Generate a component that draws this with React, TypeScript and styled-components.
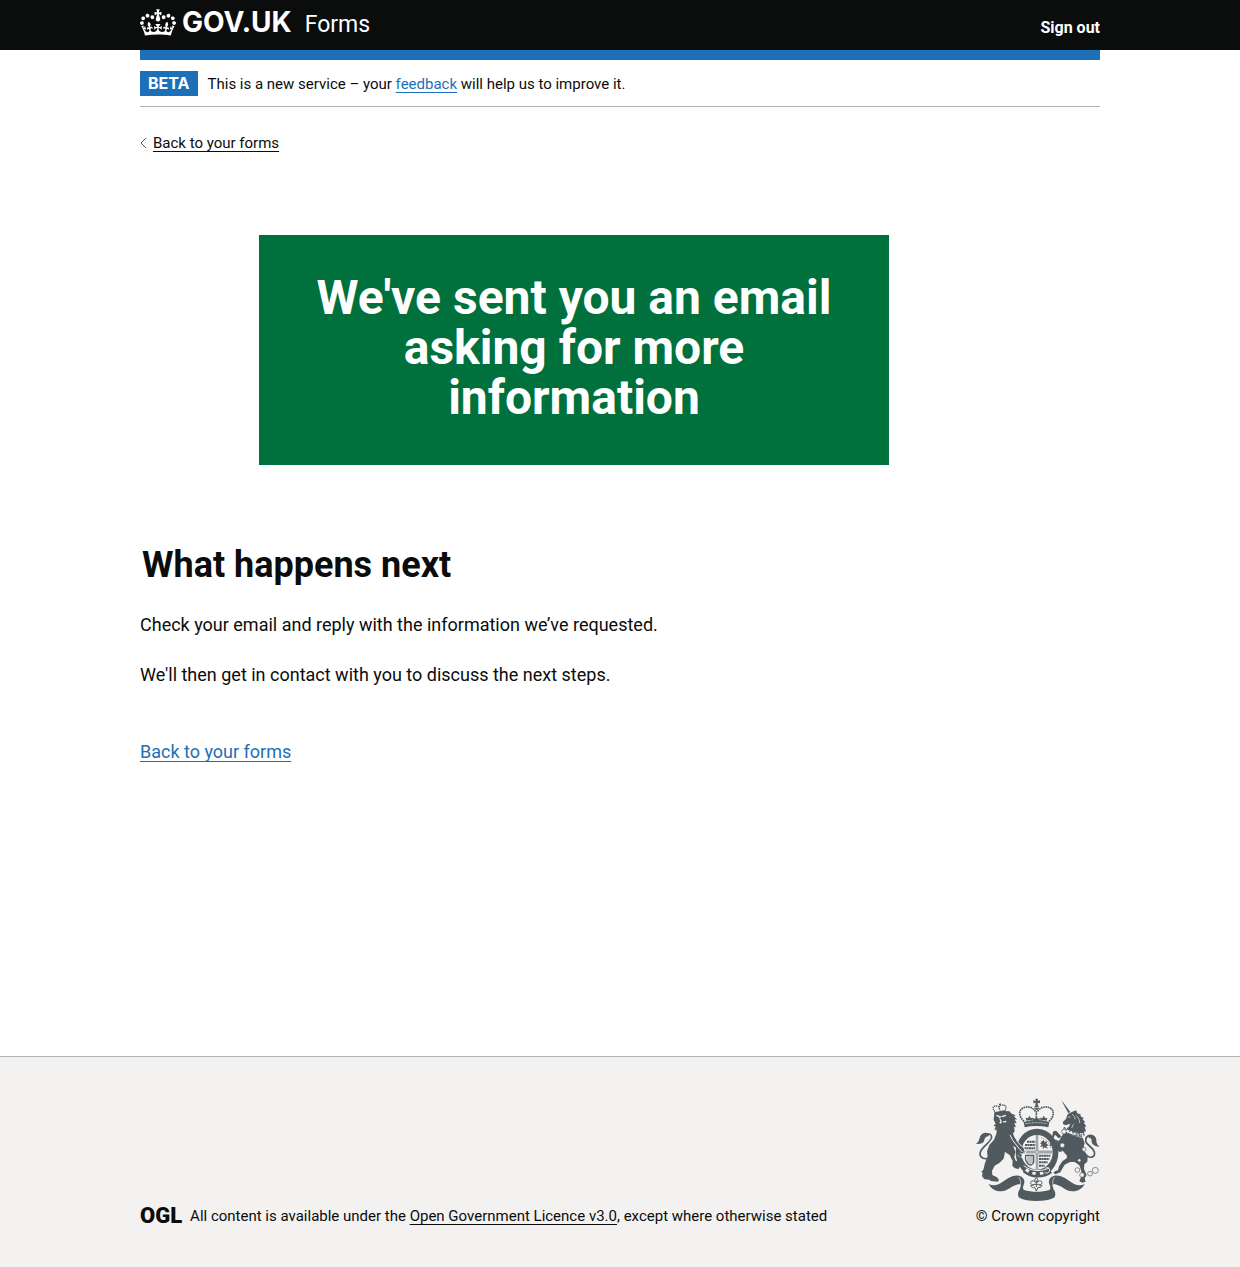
import React from "react";
import styled, { createGlobalStyle } from "styled-components";

const ink = "#0b0c0c";
const blue = "#1d70b8";
const green = "#00703c";
const grey = "#b1b4b6";
const canvas = "#f3f2f1";
const crest = "#505a5f";

const GlobalStyle = createGlobalStyle`
  *, *::before, *::after { box-sizing: border-box; }
  body {
    margin: 0;
    background: #fff;
    color: ${ink};
    font-family: Roboto, "Liberation Sans", sans-serif;
  }
  h1, h2, p { margin: 0; }
`;

const Page = styled.div`
  display: flex;
  flex-direction: column;
  min-height: 100vh;
`;

const Container = styled.div`
  width: calc(100% - 60px);
  max-width: 960px;
  margin: 0 auto;
`;

const Header = styled.header`
  background: ${ink};
  color: #fff;
`;

const HeaderRow = styled(Container)`
  display: flex;
  align-items: center;
  justify-content: space-between;
  height: 50px;
`;

const Brand = styled.a`
  display: flex;
  align-items: center;
  height: 44px;
  align-self: flex-start;
  color: #fff;
  text-decoration: none;
`;

const Logotype = styled.span`
  margin: 0 13px 0 6px;
  font: 700 28px/46px Inter, "Liberation Sans", sans-serif;
`;

const Product = styled.span`
  padding-top: 6px;
  font-size: 23px;
  line-height: 30px;
`;

const SignOut = styled.a`
  padding-top: 6px;
  color: #fff;
  font-size: 16px;
  line-height: 20px;
  font-weight: 700;
  text-decoration: none;
`;

const ColourBar = styled(Container)`
  height: 10px;
  background: ${blue};
`;

const PhaseBanner = styled(Container)`
  display: flex;
  align-items: center;
  gap: 10px;
  padding: 11px 0 10px;
  border-bottom: 1px solid ${grey};
`;

const Tag = styled.strong`
  padding: 0 8px;
  background: ${blue};
  color: #fff;
  font: 700 16px/25px Inter, "Liberation Sans", sans-serif;
`;

const SmallText = styled.span`
  font-size: 15px;
  line-height: 20px;
`;

const Link = styled.a<{ $dark?: boolean }>`
  color: ${(p) => (p.$dark ? ink : blue)};
  text-decoration: underline;
  text-decoration-thickness: 1px;
  text-decoration-skip-ink: none;
  text-underline-offset: 3px;
`;

const BackRow = styled(Container)`
  display: flex;
  align-items: center;
  gap: 6px;
  padding-top: 26px;
  line-height: 20px;
`;

const Main = styled.main`
  width: calc(100% - 60px);
  max-width: 960px;
  margin: 0 auto;
  padding: 82px 0 60px;
  flex: 1;
`;

const Panel = styled.div`
  max-width: 630px;
  margin-left: 119px;
  padding: 38px 40px 42px;
  background: ${green};
  color: #fff;
  text-align: center;
`;

const PanelTitle = styled.h1`
  font-size: 48px;
  line-height: 50px;
  font-weight: 700;
`;

const Heading = styled.h2`
  margin-top: 80px;
  padding-left: 2px;
  font-size: 36px;
  line-height: 40px;
  font-weight: 700;
`;

const Body = styled.p<{ $gap: number }>`
  margin-top: ${(p) => p.$gap}px;
  font-size: 18px;
  line-height: 25px;
`;

const Footer = styled.footer`
  background: ${canvas};
  border-top: 1px solid ${grey};
`;

const FooterRow = styled(Container)`
  display: flex;
  align-items: flex-end;
  justify-content: space-between;
  gap: 30px;
  padding: 41px 0;
`;

const Licence = styled.div`
  display: flex;
  align-items: center;
  gap: 8px;
  height: 20px;
`;

const OglMark = styled.span`
  font-size: 22px;
  line-height: 20px;
  font-weight: 900;
`;

const Copyright = styled.a`
  display: flex;
  flex-direction: column;
  align-items: center;
  gap: 5px;
  color: ${ink};
  text-decoration: none;
`;

function Crown() {
  return (
    <svg width="36" height="27" viewBox="0 0 132 97" fill="#fff" aria-hidden="true">
      <path d="M25 30.2c3.5 1.5 7.7-.2 9.1-3.7 1.5-3.6-.2-7.8-3.9-9.2-3.6-1.4-7.6.3-9.1 3.9-1.4 3.5.3 7.5 3.9 9zM9 39.5c3.6 1.5 7.8-.2 9.2-3.7 1.5-3.6-.2-7.8-3.9-9.1-3.6-1.5-7.6.2-9.1 3.8-1.4 3.5.3 7.5 3.8 9zM4.4 57.2c3.5 1.5 7.7-.2 9.1-3.8 1.5-3.6-.2-7.7-3.9-9.1-3.5-1.5-7.6.3-9.1 3.8-1.4 3.5.3 7.6 3.9 9.1zm38.3-21.4c3.5 1.5 7.7-.2 9.1-3.8 1.5-3.6-.2-7.7-3.9-9.1-3.6-1.5-7.6.3-9.1 3.8-1.3 3.6.4 7.7 3.9 9.1zm64.4-5.6c-3.6 1.5-7.8-.2-9.1-3.7-1.5-3.6.2-7.8 3.8-9.2 3.6-1.4 7.7.3 9.2 3.9 1.3 3.5-.4 7.5-3.9 9zm15.9 9.3c-3.6 1.5-7.7-.2-9.1-3.7-1.5-3.6.2-7.8 3.7-9.1 3.6-1.5 7.7.2 9.2 3.8 1.5 3.5-.3 7.5-3.8 9zm4.7 17.7c-3.6 1.5-7.8-.2-9.2-3.8-1.5-3.6.2-7.7 3.9-9.1 3.6-1.5 7.7.3 9.2 3.8 1.3 3.5-.4 7.6-3.9 9.1zM89.3 35.8c-3.6 1.5-7.8-.2-9.2-3.8-1.4-3.6.2-7.7 3.9-9.1 3.6-1.5 7.7.3 9.2 3.8 1.4 3.6-.3 7.7-3.9 9.1zM69.7 17.7l8.9 4.7V9.3l-8.9 2.8c-.2-.3-.5-.6-.9-.9L72.4 0H59.6l3.5 11.2c-.3.3-.6.5-.9.9l-8.8-2.8v13.1l8.8-4.7c.3.3.6.7.9.9l-5 15.4v.1c-.2.8-.4 1.6-.4 2.4 0 4.1 3.1 7.5 7 8.1h.2c.3 0 .7.1 1 .1.4 0 .7 0 1-.1h.2c4-.6 7.1-4.1 7.1-8.1 0-.8-.1-1.7-.4-2.4V34l-5.1-15.4c.4-.2.7-.6 1-.9zM66 92.8c16.9 0 32.8 1.1 47.1 3.2 4-16.9 8.9-26.7 14-33.5l-9.6-3.4c1 4.9 1.1 7.2 0 10.2-1.5-1.4-3-4.3-4.2-8.7L108.6 76c2.8-2 5-3.2 7.5-3.3-4.4 9.4-10 11.9-13.6 11.2-4.3-.8-6.3-4.6-5.6-7.9 1-4.7 5.7-5.9 8-.5 4.3-8.7-3-11.4-7.6-8.8 7.1-7.2 7.9-13.5 2.1-21.1-8 6.1-8.1 12.3-4.5 20.8-4.7-5.4-12.1-2.5-9.5 6.2 3.4-5.2 7.9-2 7.2 3.1-.6 4.3-6.4 7.8-13.5 7.2-10.3-.9-10.9-8-11.2-13.8 2.5-.5 7.1 1.8 11 7.3L80.2 60c-4.1 4.4-8 5.3-12.3 5.4 1.4-4.4 8-11.6 8-11.6H55.5s6.4 7.2 7.9 11.6c-4.2-.1-8-1-12.3-5.4l1.4 16.4c3.9-5.5 8.5-7.7 10.9-7.3-.3 5.8-.9 12.8-11.1 13.8-7.2.6-12.9-2.9-13.5-7.2-.7-5 3.8-8.3 7.1-3.1 2.7-8.7-4.6-11.6-9.4-6.2 3.7-8.5 3.6-14.7-4.6-20.8-5.8 7.6-5 13.9 2.2 21.1-4.7-2.6-11.9.1-7.7 8.8 2.3-5.5 7.1-4.2 8.1.5.7 3.3-1.3 7.1-5.7 7.9-3.5.7-9-1.8-13.5-11.2 2.5.1 4.7 1.3 7.5 3.3l-4.7-15.4c-1.2 4.4-2.7 7.2-4.3 8.7-1.1-3-.9-5.3 0-10.2l-9.5 3.4c5 6.9 9.9 16.7 14 33.5 14.8-2.1 30.8-3.2 47.7-3.2z" />
    </svg>
  );
}

function BackChevron() {
  return (
    <svg width="7" height="12" viewBox="0 0 7 12" fill="none" stroke="#505a5f" aria-hidden="true">
      <path d="M6 1 1 6l5 5" />
    </svg>
  );
}

function RoyalArms() {
  return (
    <svg width="124" height="103" viewBox="44 26 372 309" fill={crest} aria-hidden="true">
      {/* motto ribbon */}
      <path d="M82 284c14 7 27 4 40-5 18-13 34-24 51-20 16 4 19 17 14 28-3 7-3 12 1 15 22 7 54 7 76 0 4-3 4-8 1-15-5-11-2-24 14-28 17-4 33 7 51 20 13 9 26 12 40 5-6 14-22 23-37 22-20-1-31-16-47-20-8-2-14-1-12 5l7 17c2 7 1 13-3 17-26 13-80 13-104 0-4-4-5-10-3-17l7-17c2-6-4-7-12-5-16 4-27 19-47 20-15 1-31-8-37-22z" />
      <path d="M172 264c12 14 2 24 2 38M280 264c-12 14-2 24-2 38" fill="none" stroke={canvas} strokeWidth="2" />
      {/* garter and shield */}
      <ellipse cx="227" cy="190" rx="64" ry="72" />
      <ellipse cx="227" cy="189" rx="47" ry="52" fill={canvas} />
      <path d="M227 138v102M181 188h92" stroke={crest} strokeWidth="7" />
      <path d="M227 138v102M181 188h92" stroke={canvas} strokeWidth="3" />
      <g fill="none" stroke={crest} strokeWidth="6" strokeDasharray="7 1 5 1">
        <path d="M197 157h25M191 167h31M189 177h32" />
        <path d="M233 199h34M233 209h31M233 219h26M233 229h17" />
      </g>
      <path d="M237 152l5 4 5-4 3 6 8-2-3 7 8 5-8 2 5 8-10-4-5 5-1-8-8 2 5-7-5-5 6-2z" />
      <path d="M239 145c17 4 27 16 29 34" fill="none" stroke={crest} strokeWidth="2" strokeDasharray="3 3" />
      <path d="M193 198h24v20c-3 10-11 11-17 6-6-7-9-16-7-26z" fill="none" stroke={crest} strokeWidth="4" />
      <path d="M200 199v24M206 199v27M212 199v22" stroke={crest} strokeWidth="2" />
      {/* garter buckle */}
      <path d="M188 230c22 17 50 20 76 7l8 14c-24 18-64 19-87-2z" />
      <path d="M196 237l9 6-5 7-9-6zM214 247l10 2-2 8-10-2zM235 249l10-2 2 8-10 2z" fill={canvas} />
      <path d="M187 229c23 17 49 19 77 7M251 238c5-6 13-3 14 4 0 8-9 12-15 7" fill="none" stroke={canvas} strokeWidth="3" />
      {/* rose and thistle pendant */}
      <path d="M225 264l5 8-2 7c6-7 14-5 14 1 0 5-5 7-10 6 4 3 7 3 10 2-2 7-8 8-12 6l-5 11-5-11c-4 2-10 1-12-6 3 1 6 1 10-2-5 1-10-1-10-6 0-6 8-8 14-1l-2-7z" fill={canvas} stroke={crest} strokeWidth="3" />
      <path d="M225 273v20M218 285h14" stroke={crest} strokeWidth="3" />
      {/* imperial crown */}
      <path d="M187 98c24-7 53-7 77 0l-3 16c-23-5-49-5-71 0z" />
      <path d="M193 103c22-4 43-4 65 0" fill="none" stroke={canvas} strokeWidth="2" strokeDasharray="6 3" />
      <g fill="none" stroke={crest} strokeWidth="5" strokeDasharray="5 2">
        <path d="M188 96c-16-14-17-33-3-40 15-7 30-2 38 11" />
        <path d="M263 96c16-14 17-33 3-40-15-7-30-2-38 11" />
        <path d="M225 65v22" />
      </g>
      <path d="M222 28h8l-1 7 7-2v9l-7-2 1 9c5 3 5 11-4 13-9-2-9-10-4-13l1-9-7 2v-9l7 2z" />
      <path d="M217 55h17" stroke={canvas} strokeWidth="2" />
      <path d="M204 79l5 8 6-2-2 9-9-1-9 1-2-9 7 2zM247 79l5 8 6-2-2 9-9-1-9 1-2-9 7 2zM225 82l5 6 6-2-2 9h-18l-2-9 6 2z" />
      {/* lion's tail */}
      <path d="M82 207c-21 5-32-8-22-25 10-15 29-25 31-39-1-10-12-12-20-5" fill="none" stroke={crest} strokeWidth="5" />
      <path d="M80 132c-10-5-23 2-25 14-2 8-5 14-11 18 15 1 24-3 25-12 1-7 5-10 14-12z" />
      {/* lion */}
      <path d="M99 72l29-7 16 1 7 7 12 5-5 3 9 10-7-1 6 12-7-1 5 13-6-2 2 13-5 8 5 12 13 16 10 7 7 10-5 13-9 2-8-10-4-8-9-6 7 17-3 18 4 10 8 3 6 12-5 10-11-2-8-7 1-15-9-18-14-9-4 20-13 13-14 8-8 16 1 12 14 7 6 8-4 5-20-2-5-4-15-1-7-10 2-9-4-4 6-6 5-20 8-20-2-15 7-19 14-16 8-20-1-11-6 3 4-12-7-1 7-7-6-11z" />
      <path d="M105 78l12 5-4 3M121 82l13-4M116 89l4 9-5 4M126 98l9-2" fill="none" stroke={canvas} strokeWidth="4" />
      <path d="M146 137l8 16 18 23 11 12M131 190l14 15" fill="none" stroke={canvas} strokeWidth="3" />
      <path d="M165 152l12 15 10 8 7 12-6 15-10 2" fill="none" stroke={canvas} strokeWidth="3" />
      <path d="M69 270l8 4M80 272l7 6M157 237l7 4M175 190l7 6M168 196l6 7" stroke={canvas} strokeWidth="2" />
      {/* lion's crown */}
      <path d="M99 69l33-7 2 8-34 7z" />
      <path d="M101 67c-9-9-7-18 4-17 5 0 8 4 9 8-1-6 1-11 8-11 11-1 15 7 9 16M114 57l2 7" fill="none" stroke={crest} strokeWidth="4" strokeDasharray="4 2" />
      <path d="M111 42l4 2 3-3 1 5-5 3z" />
      {/* unicorn's tail */}
      <path d="M369 189c15 24 35 15 30-1-5-17-27-21-26-36 1-14 17-18 25-9" fill="none" stroke={crest} strokeWidth="5" />
      <path d="M382 140c13-7 24 2 23 14 0 8 4 13 10 18-14 0-25-7-24-17 0-7-3-10-9-10z" />
      {/* unicorn */}
      <path d="M301 35l4 4 22 29-6 4zM305 97l9-8 5-14 14-8 12-4 2 8 12 5-2 4 11 7-5 2 9 10-5 1 8 11-5 2 4 13-6 1 2 12-23-2-22-7-12-9 11-10 2-8-13 5-8-4z" />
      <path d="M320 84l7-1M332 75c7 4 10 9 9 15M345 79c7 6 10 13 10 22M336 105l-5 11" fill="none" stroke={canvas} strokeWidth="2" />
      <path d="M310 126l18 9 22 8 14 2 6 16-3 12 2 14 10 14-1 16-9 8-1 14 8 18-6 10 3 10-10 3-9-4 5-12 1-18-6-18-14-10h-14l-16 8-8 14-5 9-15 6-6-5 6-5 8-2 3-12 10-15 13-9 1-8-12-14-12-2-8 8 4 10-8 3-6-11 4-14 8-5 3-14z" />
      <path d="M275 128c5-6 11-4 15 2l11 12-9 5-11-11-4 9-5-1zM282 156l12 4-4 9 4 12 10 5-9 2-9-7-2-13z" />
      <path d="M268 160c4-8 12-9 18-5l12 3M271 158l-4 12" fill="none" stroke={crest} strokeWidth="5" />
      {/* coronet collar and chain */}
      <path d="M305 119c17 11 36 18 61 18" fill="none" stroke={canvas} strokeWidth="10" />
      <path d="M305 124c17 11 36 17 58 17" fill="none" stroke={crest} strokeWidth="3" />
      <path d="M307 121l2-8 6 9 6-7 4 12 7-7 3 12 8-7 2 11 9-6v9l9-4" fill="none" stroke={crest} strokeWidth="3" />
      <g fill={canvas} stroke={crest} strokeWidth="2">
        <circle cx="308" cy="127" r="7" />
        <circle cx="303" cy="168" r="7" />
        <circle cx="368" cy="180" r="6" />
        <circle cx="354" cy="213" r="5" />
        <circle cx="348" cy="242" r="7" />
        <circle cx="362" cy="257" r="7" />
        <circle cx="386" cy="253" r="7" />
        <circle cx="402" cy="243" r="9" />
      </g>
    </svg>
  );
}

export default function App() {
  return (
    <>
      <GlobalStyle />
      <Page>
        <Header>
          <HeaderRow>
            <Brand href="#" aria-label="GOV.UK Forms">
              <Crown />
              <Logotype>GOV.UK</Logotype>
              <Product>Forms</Product>
            </Brand>
            <SignOut href="#">Sign out</SignOut>
          </HeaderRow>
        </Header>
        <ColourBar />
        <PhaseBanner>
          <Tag>BETA</Tag>
          <SmallText>
            This is a new service – your <Link href="#">feedback</Link> will help us to improve it.
          </SmallText>
        </PhaseBanner>
        <BackRow>
          <BackChevron />
          <SmallText>
            <Link $dark href="#">Back to your forms</Link>
          </SmallText>
        </BackRow>
        <Main>
          <Panel>
            <PanelTitle>We've sent you an email asking for more information</PanelTitle>
          </Panel>
          <Heading>What happens next</Heading>
          <Body $gap={27}>Check your email and reply with the information we’ve requested.</Body>
          <Body $gap={25}>We'll then get in contact with you to discuss the next steps.</Body>
          <Body $gap={52}>
            <Link href="#">Back to your forms</Link>
          </Body>
        </Main>
        <Footer>
          <FooterRow>
            <Licence>
              <OglMark>OGL</OglMark>
              <SmallText>
                All content is available under the <Link $dark href="#">Open Government Licence v3.0</Link>, except where
                otherwise stated
              </SmallText>
            </Licence>
            <Copyright href="#">
              <RoyalArms />
              <SmallText>© Crown copyright</SmallText>
            </Copyright>
          </FooterRow>
        </Footer>
      </Page>
    </>
  );
}
